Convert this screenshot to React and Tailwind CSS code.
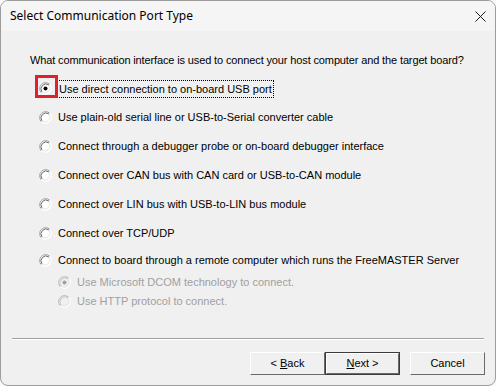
import React from 'react';

const OPTIONS = [
  'Use direct connection to on-board USB port',
  'Use plain-old serial line or USB-to-Serial converter cable',
  'Connect through a debugger probe or on-board debugger interface',
  'Connect over CAN bus with CAN card or USB-to-CAN module',
  'Connect over LIN bus with USB-to-LIN bus module',
  'Connect over TCP/UDP',
];

function Radio({ checked, disabled }) {
  return (
    <svg width="13" height="13" viewBox="0 0 13 13" className="shrink-0">
      <circle cx="6.5" cy="6.5" r="6" fill={disabled ? '#f0f0f0' : '#ffffff'} />
      <path d="M2.26 10.74 A6 6 0 0 1 10.74 2.26" fill="none" stroke={disabled ? '#b5b5b5' : '#a0a0a0'} strokeWidth="1" />
      <path d="M10.74 2.26 A6 6 0 0 1 2.26 10.74" fill="none" stroke="#ffffff" strokeWidth="1" />
      <path d="M3 10 A5 5 0 0 1 10 3" fill="none" stroke={disabled ? '#c8c8c8' : '#696969'} strokeWidth="1" />
      <path d="M10 3 A5 5 0 0 1 3 10" fill="none" stroke="#e3e3e3" strokeWidth="1" />
      {checked && <circle cx="6.5" cy="6.5" r="2" fill={disabled ? '#a0a0a0' : '#000000'} />}
    </svg>
  );
}

function Button({ children, isDefault }) {
  return (
    <div className={`w-[75px] h-[23px] ${isDefault ? 'border border-[#3c3c3c]' : ''}`}>
      <div className="w-full h-full flex items-center justify-center bg-[#f0f0f0] border-t border-l border-t-white border-l-white border-b border-r border-b-[#696969] border-r-[#696969] text-[11px] text-black">
        {children}
      </div>
    </div>
  );
}

export default function App() {
  return (
    <div className="w-[496px] h-[386px] bg-[#fafafa]" style={{ fontFamily: '"Liberation Sans", Arial, sans-serif' }}>
      <div className="w-full h-full flex flex-col rounded-lg overflow-hidden border border-[#9c9c9c] bg-[#f0f0f0]">
        {/* title bar */}
        <div className="h-[30px] shrink-0 flex items-center justify-between pl-[9px] pr-[9px] bg-[#f5f5f5]">
          <span className="text-[12px] text-black" style={{ fontFamily: '"Noto Sans", "Open Sans", sans-serif' }}>Select Communication Port Type</span>
          <svg width="11" height="11" viewBox="0 0 11 11">
            <path d="M0.5 0.5 L10.5 10.5 M10.5 0.5 L0.5 10.5" stroke="#1a1a1a" strokeWidth="1" />
          </svg>
        </div>

        <div className="flex-1 flex flex-col text-[11px] text-black">
          <div className="mt-[22px] h-[14px] leading-[14px] pl-[29px] tracking-[-0.13px]">
            What communication interface is used to connect your host computer and the target board?
          </div>

          <div className="mt-[7px] flex flex-col">
            {OPTIONS.map((label, i) => (
              <div key={label} className="h-[29px] flex items-center pl-[38px]">
                {i === 0 ? (
                  <div className="relative flex items-center">
                    <div className="absolute left-[-4px] top-[-5px] w-[23px] h-[23px] border-[3px] border-[#e0212b]" />
                    <Radio checked />
                    <span className="ml-[5px] px-[1px] leading-[16px] border border-dotted border-black">{label}</span>
                  </div>
                ) : (
                  <div className="flex items-center">
                    <Radio />
                    <span className="ml-[6px] leading-[15px]">{label}</span>
                  </div>
                )}
              </div>
            ))}
            <div className="h-[24px] flex items-center pl-[38px]">
              <Radio />
              <span className="ml-[6px]">Connect to board through a remote computer which runs the FreeMASTER Server</span>
            </div>
            <div className="h-[20px] flex items-center pl-[57px] text-[#a0a0a0]">
              <Radio checked disabled />
              <span className="ml-[6px]">Use Microsoft DCOM technology to connect.</span>
            </div>
            <div className="h-[18px] flex items-center pl-[57px] text-[#a0a0a0]">
              <Radio disabled />
              <span className="ml-[6px]">Use HTTP protocol to connect.</span>
            </div>
          </div>

          <div className="mt-auto mx-[11px] border-t border-t-[#a0a0a0] border-b border-b-white" />
          <div className="h-[45px] flex items-start pt-[12px] pr-[10px] justify-end">
            <Button><span>&lt; <u>B</u>ack</span></Button>
            <Button isDefault><span><u>N</u>ext &gt;</span></Button>
            <div className="w-[10px]" />
            <Button>Cancel</Button>
          </div>
        </div>
      </div>
    </div>
  );
}
